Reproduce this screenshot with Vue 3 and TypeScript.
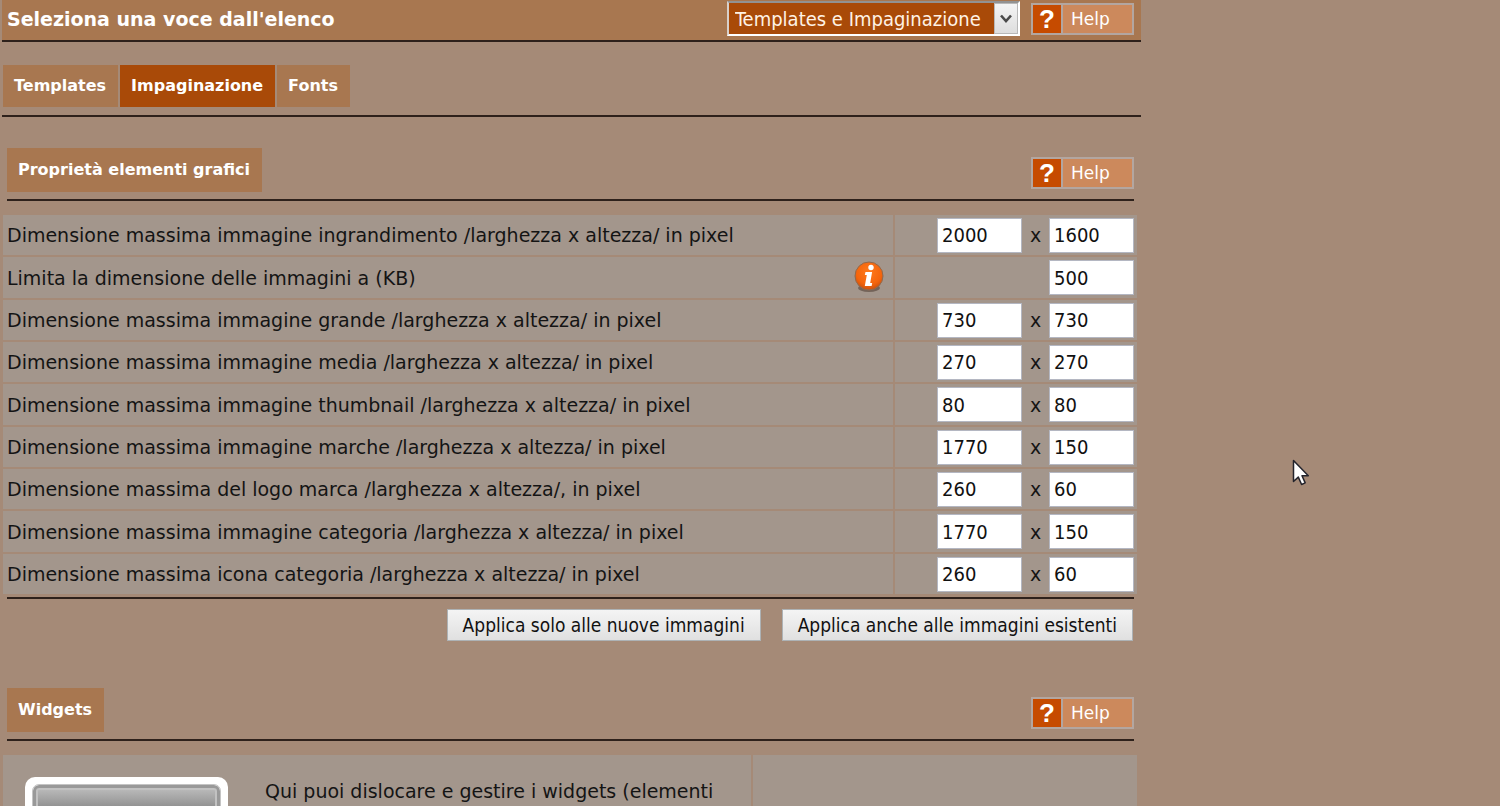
<script setup lang="ts">
import { ref } from 'vue'

interface SizeRow {
  id: string
  label: string
  width: string | null
  height: string
  info?: boolean
}

const area = ref('Templates e Impaginazione')
const tabs = ['Templates', 'Impaginazione', 'Fonts']
const activeTab = ref('Impaginazione')

const suffix = '/larghezza x altezza/ in pixel'
const rows = ref<SizeRow[]>([
  { id: 'zoom', label: `Dimensione massima immagine ingrandimento ${suffix}`, width: '2000', height: '1600' },
  { id: 'limit', label: 'Limita la dimensione delle immagini a (KB)', width: null, height: '500', info: true },
  { id: 'large', label: `Dimensione massima immagine grande ${suffix}`, width: '730', height: '730' },
  { id: 'medium', label: `Dimensione massima immagine media ${suffix}`, width: '270', height: '270' },
  { id: 'thumb', label: `Dimensione massima immagine thumbnail ${suffix}`, width: '80', height: '80' },
  { id: 'brand', label: `Dimensione massima immagine marche ${suffix}`, width: '1770', height: '150' },
  { id: 'logo', label: 'Dimensione massima del logo marca /larghezza x altezza/, in pixel', width: '260', height: '60' },
  { id: 'category', label: `Dimensione massima immagine categoria ${suffix}`, width: '1770', height: '150' },
  { id: 'icon', label: `Dimensione massima icona categoria ${suffix}`, width: '260', height: '60' },
])
</script>

<template>
  <div class="page">
    <main class="panel">
      <header class="topbar">
        <label class="topbar-title" for="area">Seleziona una voce dall'elenco</label>
        <div class="picker">
          <select id="area" v-model="area">
            <option>Templates e Impaginazione</option>
          </select>
          <span class="picker-arrow">
            <svg width="12" height="10" viewBox="0 0 12 10"><path d="M1 1.5 6 7l5-5.5" fill="none" stroke="#4a4a4a" stroke-width="2.6" /></svg>
          </span>
        </div>
        <button type="button" class="help"><span class="help-mark">?</span><span class="help-text">Help</span></button>
      </header>

      <nav class="tabs">
        <button
          v-for="tab in tabs"
          :key="tab"
          type="button"
          class="tab"
          :class="{ active: tab === activeTab }"
          @click="activeTab = tab"
        >{{ tab }}</button>
      </nav>

      <section class="group">
        <div class="group-head">
          <h2>Proprietà elementi grafici</h2>
          <button type="button" class="help"><span class="help-mark">?</span><span class="help-text">Help</span></button>
        </div>
        <table class="sizes">
          <tbody>
            <tr v-for="row in rows" :key="row.id">
              <td>
                <div class="name">
                  <label :for="row.id">{{ row.label }}</label>
                  <svg v-if="row.info" class="info" width="32" height="34" viewBox="0 0 32 34">
                    <defs>
                      <radialGradient id="orb" cx="50%" cy="35%" r="65%">
                        <stop offset="0" stop-color="#ff7a1c" />
                        <stop offset="0.7" stop-color="#f4640c" />
                        <stop offset="1" stop-color="#c9500d" />
                      </radialGradient>
                    </defs>
                    <ellipse cx="16" cy="28" rx="11" ry="4" fill="#4d3b30" opacity="0.55" />
                    <circle cx="16" cy="16" r="14" fill="url(#orb)" stroke="#8f6a50" stroke-width="1" />
                    <circle cx="18" cy="7.500" r="2.700" fill="#fff" />
                    <path d="M12.500 12h6.600l-1.900 11h2l-.6 3h-6.800l2-11h-2z" fill="#fff" />
                  </svg>
                </div>
              </td>
              <td>
                <div class="fields">
                  <template v-if="row.width !== null">
                    <input v-model="row.width" type="text" :aria-label="`${row.label}, larghezza`" />
                    <span class="times">x</span>
                  </template>
                  <input :id="row.id" v-model="row.height" type="text" />
                </div>
              </td>
            </tr>
          </tbody>
        </table>
        <div class="actions">
          <button type="button">Applica solo alle nuove immagini</button>
          <button type="button">Applica anche alle immagini esistenti</button>
        </div>
      </section>

      <section class="group">
        <div class="group-head">
          <h2>Widgets</h2>
          <button type="button" class="help"><span class="help-mark">?</span><span class="help-text">Help</span></button>
        </div>
        <div class="widgets">
          <div class="widget">
            <div class="thumb"><div class="thumb-screen"></div></div>
            <p>Qui puoi dislocare e gestire i widgets (elementi</p>
          </div>
          <div class="widget"></div>
        </div>
      </section>
    </main>

    <svg class="pointer" width="18" height="28" viewBox="0 0 18 28">
      <path d="M1.500 1.500v21l4.800-4.400 3.300 7.400 3.600-1.600-3.200-7.200h6.300z" fill="#fff" stroke="#23232b" stroke-width="1.500" stroke-linejoin="round" />
    </svg>
  </div>
</template>

<style>
body {
  margin: 0;
  background: #a58a77;
}
</style>

<style scoped>
.page {
  position: relative;
  height: 100vh;
  overflow: hidden;
  background: #a58a77;
  color: #141414;
  font: 19px/24px Verdana, "DejaVu Sans", sans-serif;
}

.panel {
  box-sizing: border-box;
  width: 76%;
  margin-left: 1px;
  padding-left: 1px;
}

button,
input,
select {
  margin: 0;
  border-radius: 0;
  font-family: inherit;
}

.topbar {
  display: flex;
  align-items: center;
  height: 37px;
  padding: 0 7px 3px 5px;
  border-bottom: 2px solid #2e211b;
  background: #a87750;
}

.topbar-title {
  flex: 1;
  color: #fff;
  font-size: 19px;
  font-weight: bold;
}

.picker {
  display: grid;
  grid-template-columns: 1fr 24px;
  box-sizing: border-box;
  width: 293px;
  height: 35px;
  margin-right: 11px;
  border: 2px solid;
  border-color: #929292 #fff #fff #d8d0ca;
  background: #a94a08;
}

.picker select {
  grid-area: 1 / 1 / 2 / 3;
  appearance: none;
  border: 0;
  padding: 0 0 0 6px;
  background: #a94a08;
  color: #fff2e4;
  font: 20px "DejaVu Sans Condensed", "DejaVu Sans", sans-serif;
}

.picker-arrow {
  grid-area: 1 / 2 / 2 / 3;
  display: grid;
  place-items: center;
  box-sizing: border-box;
  border: 1px solid #b8b8b8;
  background: linear-gradient(#f4f4f4, #dedede);
  pointer-events: none;
}

.help {
  display: flex;
  box-sizing: border-box;
  width: 103px;
  height: 32px;
  padding: 0;
  border: 2px solid #b3a6a0;
  background: #cc895c;
  color: #fff;
}

.help-mark {
  width: 28px;
  border-right: 2px solid #b3a6a0;
  background: #c64b00;
  font: bold 26px/28px "Liberation Sans", sans-serif;
}

.help-text {
  padding-left: 8px;
  font-size: 17px;
  line-height: 28px;
}

.tabs {
  display: flex;
  gap: 2px;
  padding: 23px 0 8px 1px;
  border-bottom: 2px solid #2e211b;
}

.tab,
h2 {
  margin: 0;
  border: 0;
  padding: 0 12px 0 11px;
  background: #a87750;
  color: #fff;
  font-size: 16px;
  font-weight: bold;
  line-height: 42px;
}

.tab.active {
  background: #a94a08;
}

.group-head {
  display: flex;
  align-items: center;
  justify-content: space-between;
  margin: 31px 7px 12px 5px;
  padding-bottom: 7px;
  border-bottom: 2px solid #2e211b;
}

h2 {
  line-height: 44px;
}

.group-head .help {
  margin-top: 6px;
}

.sizes {
  width: calc(100% - 3px);
  border-spacing: 1px 2px;
}

.sizes tr {
  height: 40px;
}

.sizes tr:nth-child(3n + 2) {
  height: 41px;
}

.sizes td {
  padding: 0 4px;
  background: #a3968c;
}

.sizes td:last-child {
  width: 236px;
  padding: 0 3px;
  border-left: 1px solid #a58a77;
}

.name,
.fields {
  display: flex;
  align-items: center;
}

.name {
  justify-content: space-between;
  white-space: nowrap;
}

.info {
  margin: -4px 4px -2px 0;
}

.fields {
  justify-content: flex-end;
}

.fields input {
  box-sizing: border-box;
  width: 85px;
  height: 35px;
  border: 1px solid #b4b7c2;
  padding: 0 4px;
  background: #fff;
  color: #111;
  font: 20px "DejaVu Sans Condensed", "DejaVu Sans", sans-serif;
}

.times {
  width: 27px;
  text-align: center;
}

.actions {
  display: flex;
  justify-content: flex-end;
  gap: 21px;
  margin: 1px 7px 0 5px;
  padding: 10px 1px 0 0;
  border-top: 2px solid #2e211b;
}

.actions button {
  height: 32px;
  border: 1px solid #adb2b5;
  padding: 0 15px;
  background: linear-gradient(#f4f4f4, #e0e0e0);
  color: #111;
  font: 19px "DejaVu Sans Condensed", "DejaVu Sans", sans-serif;
}

.group + .group .group-head {
  margin-top: 47px;
}

.widgets {
  display: grid;
  grid-template-columns: 748fr 384fr;
  gap: 2px;
  margin: 14px 4px 0 1px;
}

.widget {
  display: flex;
  gap: 37px;
  min-height: 100px;
  padding: 22px;
  background: #a3968c;
}

.widget p {
  margin: 2px 0 0;
  white-space: nowrap;
}

.thumb {
  box-sizing: border-box;
  flex: none;
  width: 203px;
  height: 120px;
  padding: 8px;
  border-radius: 10px;
  background: #fff;
}

.thumb-screen {
  box-sizing: border-box;
  height: 100%;
  border: 3px solid #999;
  border-radius: 6px;
  outline: 1px solid #c4c4c4;
  background: linear-gradient(#bcbcbc, #8f8f8f 20px);
  box-shadow: inset 0 0 0 2px #c2c2c2;
}

.pointer {
  position: absolute;
  top: 459px;
  left: 1292px;
}
</style>
